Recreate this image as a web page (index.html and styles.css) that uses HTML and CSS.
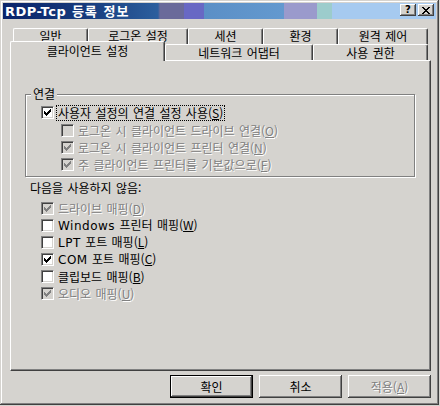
FILE: index.html
```
<!DOCTYPE html>
<html lang="ko">
<head>
<meta charset="utf-8">
<title>RDP-Tcp 등록 정보</title>
<link rel="stylesheet" href="styles.css">
</head>
<body>
<div class="window">
  <div class="titlebar">
    <span class="title"><span class="lat">RDP-Tcp</span> 등록 정보</span>
    <div class="tbtns">
      <span class="tbtn help">?</span>
      <span class="tbtn close"><svg width="8" height="7" viewBox="0 0 8 7"><path d="M0 0h2v1h-2zM6 0h2v1h-2zM1 1h2v1h-2zM5 1h2v1h-2zM2 2h4v1h-4zM3 3h2v1h-2zM2 4h4v1h-4zM1 5h2v1h-2zM5 5h2v1h-2zM0 6h2v1h-2zM6 6h2v1h-2z" fill="#000"/></svg></span>
    </div>
  </div>
  <div class="content">
    <div class="tabs">
      <div class="tabrow back">
        <div class="tab w75">일반</div>
        <div class="tab w100">로그온 설정</div>
        <div class="tab w75">세션</div>
        <div class="tab w75">환경</div>
        <div class="tab w90">원격 제어</div>
      </div>
      <div class="tabrow front">
        <div class="tab selected">클라이언트 설정</div>
        <div class="tab w148">네트워크 어댑터</div>
        <div class="tab w115">사용 권한</div>
      </div>
    </div>
    <div class="panel">
      <fieldset class="group">
        <legend>연결</legend>
        <div class="row first">
          <span class="cb"><svg width="11" height="11" viewBox="0 0 11 11"><path class="chk" d="M2 4h1v3h-1zM3 5h1v3h-1zM4 6h1v3h-1zM5 5h1v3h-1zM6 4h1v3h-1zM7 3h1v3h-1zM8 2h1v3h-1z"/></svg></span>
          <span class="lbl focus">사용자 설정의 연결 설정 사용(<u>S</u>)</span>
        </div>
        <div class="row sub dis">
          <span class="cb"></span>
          <span class="lbl">로그온 시 클라이언트 드라이브 연결(<u>O</u>)</span>
        </div>
        <div class="row sub dis">
          <span class="cb"><svg width="11" height="11" viewBox="0 0 11 11"><path class="chk" d="M2 4h1v3h-1zM3 5h1v3h-1zM4 6h1v3h-1zM5 5h1v3h-1zM6 4h1v3h-1zM7 3h1v3h-1zM8 2h1v3h-1z"/></svg></span>
          <span class="lbl">로그온 시 클라이언트 프린터 연결(<u>N</u>)</span>
        </div>
        <div class="row sub dis">
          <span class="cb"><svg width="11" height="11" viewBox="0 0 11 11"><path class="chk" d="M2 4h1v3h-1zM3 5h1v3h-1zM4 6h1v3h-1zM5 5h1v3h-1zM6 4h1v3h-1zM7 3h1v3h-1zM8 2h1v3h-1z"/></svg></span>
          <span class="lbl">주 클라이언트 프린터를 기본값으로(<u>F</u>)</span>
        </div>
      </fieldset>
      <div class="section-label">다음을 사용하지 않음:</div>
      <div class="list">
        <div class="row dis">
          <span class="cb"><svg width="11" height="11" viewBox="0 0 11 11"><path class="chk" d="M2 4h1v3h-1zM3 5h1v3h-1zM4 6h1v3h-1zM5 5h1v3h-1zM6 4h1v3h-1zM7 3h1v3h-1zM8 2h1v3h-1z"/></svg></span>
          <span class="lbl">드라이브 매핑(<u>D</u>)</span>
        </div>
        <div class="row">
          <span class="cb"></span>
          <span class="lbl"><span class="lat">Windows</span> 프린터 매핑(<u>W</u>)</span>
        </div>
        <div class="row">
          <span class="cb"></span>
          <span class="lbl"><span class="lat">LPT</span> 포트 매핑(<u>L</u>)</span>
        </div>
        <div class="row">
          <span class="cb"><svg width="11" height="11" viewBox="0 0 11 11"><path class="chk" d="M2 4h1v3h-1zM3 5h1v3h-1zM4 6h1v3h-1zM5 5h1v3h-1zM6 4h1v3h-1zM7 3h1v3h-1zM8 2h1v3h-1z"/></svg></span>
          <span class="lbl"><span class="lat">COM</span> 포트 매핑(<u>C</u>)</span>
        </div>
        <div class="row">
          <span class="cb"></span>
          <span class="lbl">클립보드 매핑(<u>B</u>)</span>
        </div>
        <div class="row dis">
          <span class="cb"><svg width="11" height="11" viewBox="0 0 11 11"><path class="chk" d="M2 4h1v3h-1zM3 5h1v3h-1zM4 6h1v3h-1zM5 5h1v3h-1zM6 4h1v3h-1zM7 3h1v3h-1zM8 2h1v3h-1z"/></svg></span>
          <span class="lbl">오디오 매핑(<u>U</u>)</span>
        </div>
      </div>
    </div>
    <div class="buttons">
      <div class="btn default">확인</div>
      <div class="btn">취소</div>
      <div class="btn disabled">적용(<u>A</u>)</div>
    </div>
  </div>
</div>
</body>
</html>
```
FILE: styles.css
```
* { box-sizing: border-box; }
html, body { margin: 0; padding: 0; background: #d5d3cf; }
body {
  font-family: "Noto Sans CJK KR", sans-serif;
  font-size: 12px;
  word-spacing: 1px;
  color: #000;
}
.lat { font-family: "DejaVu Sans", "Noto Sans CJK KR", sans-serif; letter-spacing: 0.5px; }
.window {
  width: 439px;
  height: 405px;
  padding: 3px;
  background: #d5d3cf;
  box-shadow: inset -1px -1px #404040, inset 1px 1px #d5d3cf, inset -2px -2px #808080, inset 2px 2px #fff;
  display: flex;
  flex-direction: column;
}
.titlebar {
  height: 16px;
  flex: none;
  display: flex;
  align-items: flex-start;
  justify-content: space-between;
  padding: 0 2px;
  background: linear-gradient(to right,
    #0a246a 0px, #163a7c 80px, #2c5f9e 155px,
    #6a6a9a 157px, #6a6a9a 181px,
    #6868c4 181px, #6868c4 201px,
    #5b8fc6 201px, #6399cf 281px,
    #9a9acc 281px, #9a9acc 314px,
    #9ccccc 314px, #9ccccc 329px,
    #a6caf0 329px);
}
.title {
  color: #fff;
  font-weight: bold;
  letter-spacing: 1px;
  word-spacing: 1px;
  line-height: 16px;
  font-size: 13px;
}
.title .lat { letter-spacing: 0.5px; }
.tbtns { display: flex; gap: 2px; margin-top: 1px; }
.tbtn {
  width: 16px;
  height: 12px;
  background: #d5d3cf;
  box-shadow: inset -1px -1px #404040, inset 1px 1px #fff, inset -2px -2px #808080;
  display: flex;
  align-items: center;
  justify-content: center;
  font-family: "DejaVu Sans", sans-serif;
  font-weight: bold;
  font-size: 10px;
  line-height: 12px;
}
.tbtn svg { display: block; }
.content {
  flex: 1;
  display: flex;
  flex-direction: column;
  padding: 9px 5px 4px 7px;
}
.tabs { display: flex; flex-direction: column; flex: none; }
.tabrow { display: flex; height: 16px; }
.tabrow.back { padding-left: 3px; }
.tabrow.back .tab { padding-bottom: 3px; }
.tabrow.front { align-items: flex-end; }
.tab {
  height: 16px;
  flex: none;
  border-top: 1px solid #fff;
  border-left: 1px solid #fff;
  border-right: 1px solid #404040;
  border-radius: 2px 2px 0 0;
  box-shadow: inset -1px 0 #808080;
  background: #d5d3cf;
  display: flex;
  align-items: center;
  justify-content: center;
  line-height: 11px;
}
.w75 { width: 75px; }
.w90 { width: 90px; }
.w100 { width: 100px; }
.w115 { width: 115px; }
.w148 { width: 148px; }
.tab.selected {
  width: 155px;
  height: 20px;
  margin-bottom: -1px;
  position: relative;
  z-index: 1;
  padding-bottom: 2px;
}
.panel {
  flex: 1;
  border-top: 1px solid #fff;
  border-left: 1px solid #fff;
  border-right: 1px solid #404040;
  border-bottom: 1px solid #404040;
  box-shadow: inset -1px -1px #808080;
  padding: 26px 0 0 14px;
}
.group {
  width: 390px;
  margin: 0;
  padding: 3px 0 3px 5px;
  border: 1px solid #808080;
  box-shadow: inset 1px 1px #fff, 1px 1px #fff;
  min-inline-size: 0;
}
.group legend {
  padding: 0 2px;
  line-height: 14px;
  background: #d5d3cf;
}
.row {
  display: flex;
  align-items: center;
  height: 17px;
  margin-left: 10px;
}
.row.first { margin-bottom: 1px; }
.row.sub { margin-left: 30px; }
.list .row { margin-left: 16px; }
.cb {
  width: 13px;
  height: 13px;
  flex: none;
  background: #fff;
  border: 1px solid;
  border-color: #808080 #fff #fff #808080;
  box-shadow: inset 1px 1px #404040, inset -1px -1px #d5d3cf;
}
.cb svg { display: block; }
.chk { fill: #000; }
.row.dis .cb { background: #d5d3cf; }
.row.dis .chk { fill: #808080; }
.lbl {
  margin-left: 4px;
  line-height: 14px;
  white-space: nowrap;
}
.lbl.focus { outline: 1px dotted #000; margin-left: 3px; padding: 0 1px; }
.row.dis .lbl { color: #808080; text-shadow: 1px 1px 0 #fff; }
.section-label {
  margin: 4px 0 5px 5px;
  line-height: 14px;
}
.buttons {
  flex: none;
  display: flex;
  justify-content: flex-end;
  gap: 6px;
  margin-top: 4px;
}
.btn {
  width: 83px;
  height: 23px;
  background: #d5d3cf;
  box-shadow: inset -1px -1px #404040, inset 1px 1px #fff, inset -2px -2px #808080;
  display: flex;
  align-items: center;
  justify-content: center;
  line-height: 14px;
}
.btn.default {
  box-shadow: inset 0 0 0 1px #000, inset -2px -2px #404040, inset 2px 2px #fff, inset -3px -3px #808080;
}
.btn.disabled { color: #808080; text-shadow: 1px 1px 0 #fff; }
```
